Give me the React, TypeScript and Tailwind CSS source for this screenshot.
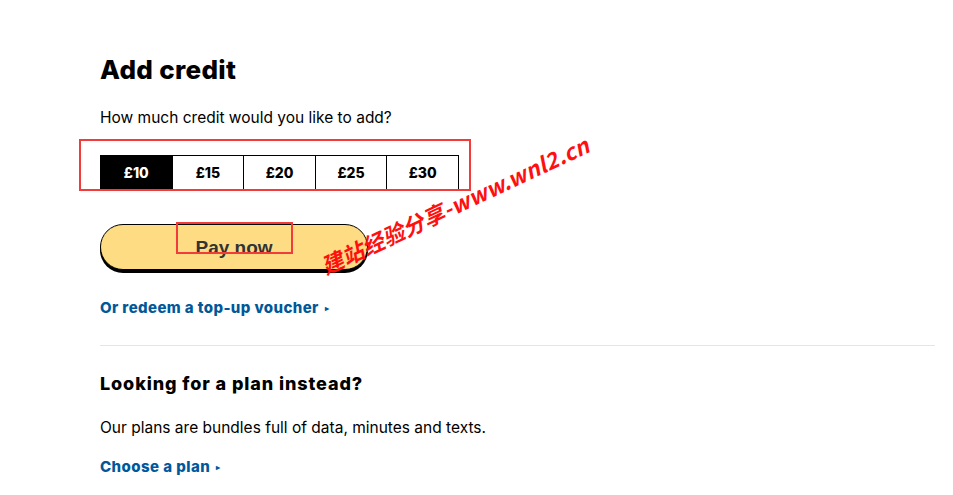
const amounts = ["£10", "£15", "£20", "£25", "£30"];

const sans = "font-['Inter','Noto_Sans',sans-serif]";

function Arrow() {
  return <span className="ml-1.5 inline-block align-middle text-[8px] leading-none">▸</span>;
}

export default function App() {
  return (
    <div className={`relative min-h-[495px] w-full bg-white text-black ${sans}`}>
      <div className="box-content flex w-[835px] flex-col pl-[100px] pt-[54px]">
        <h1 className="text-[26px] font-extrabold leading-[32px] tracking-[0.3px]">Add credit</h1>
        <p className="mt-[21px] text-[15.5px] leading-[22px]">How much credit would you like to add?</p>

        {/* amount picker */}
        <div className="mt-[26px] flex h-[35px] w-[359px] border border-black">
          {amounts.map((a, i) => (
            <button
              key={a}
              type="button"
              className={`flex flex-1 items-center justify-center text-[14px] font-extrabold ${
                i === 0 ? "bg-black text-white" : "border-l border-black bg-white text-black"
              }`}
            >
              {a}
            </button>
          ))}
        </div>

        <button
          type="button"
          className="mt-[34px] flex h-[46px] w-[268px] items-center justify-center rounded-full border border-black bg-[#fddc84] pt-[3px] font-['Liberation_Sans',Arial,sans-serif] text-[19px] font-bold text-[#333] shadow-[0_3px_0_#000]"
        >
          Pay now
        </button>

        <a className="mt-[28px] flex items-center text-[15px] font-extrabold leading-[20px] tracking-[0.4px] text-[#00589a]">
          Or redeem a top-up voucher <Arrow />
        </a>

        <div className="mt-[27px] h-px w-full bg-[#e5e5e5]" />

        <h2 className="mt-[26px] text-[18px] font-extrabold leading-[24px] tracking-[0.9px]">Looking for a plan instead?</h2>
        <p className="mt-[21px] text-[15.5px] leading-[22px]">Our plans are bundles full of data, minutes and texts.</p>
        <a className="mt-[18px] flex items-center text-[15px] font-extrabold leading-[20px] tracking-[0.45px] text-[#00589a]">
          Choose a plan <Arrow />
        </a>
      </div>

      {/* annotation boxes and watermark laid over the screenshot */}
      <div className="pointer-events-none absolute left-[79px] top-[139px] h-[52px] w-[392px] border-2 border-[#f23b3b]" />
      <div className="pointer-events-none absolute left-[176px] top-[222px] h-[32px] w-[117px] border-2 border-[#f23b3b]" />
      <div className="pointer-events-none absolute left-[322px] top-[250px] origin-left -rotate-[25deg] whitespace-nowrap font-['Noto_Sans_CJK_SC','Noto_Sans',sans-serif] text-[22px] font-bold italic tracking-[0.3px] text-[#ff1010]">
        建站经验分享-www.wnl2.cn
      </div>
    </div>
  );
}
